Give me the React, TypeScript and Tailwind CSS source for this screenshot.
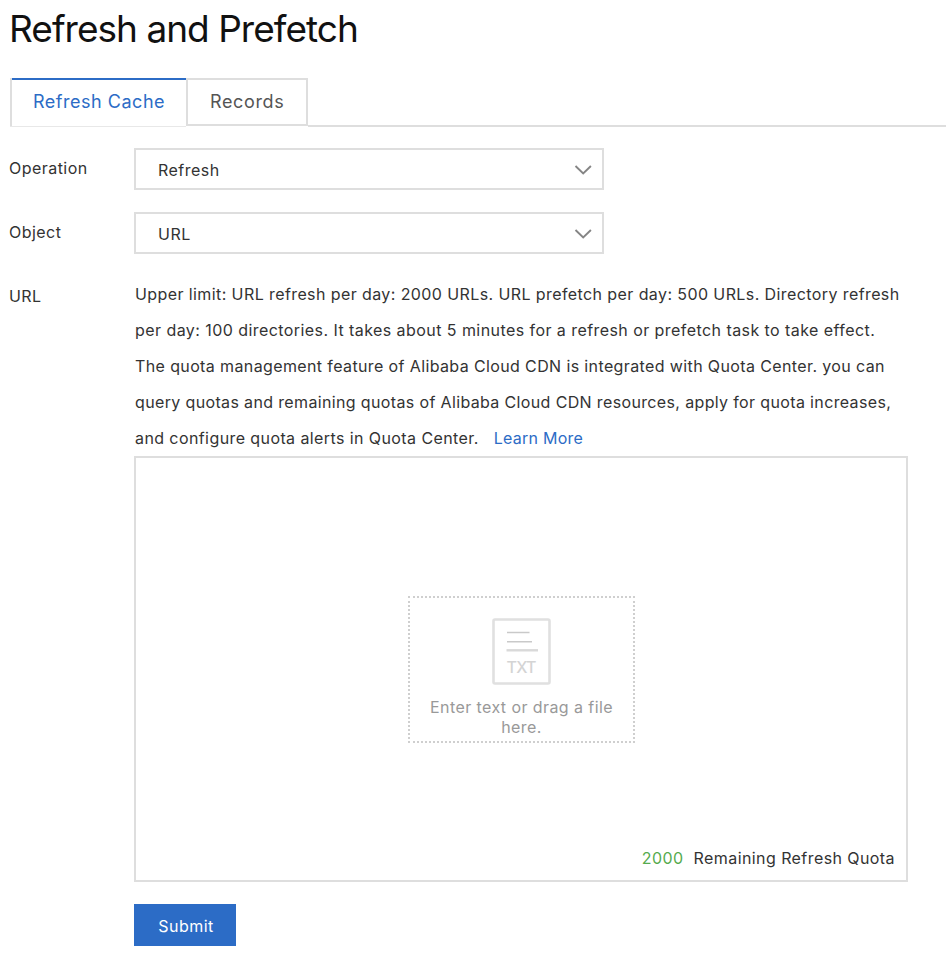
import type { ReactNode } from "react";

function Tab({ active, children }: { active?: boolean; children: ReactNode }) {
  return active ? (
    <div className="flex h-[49px] w-44 flex-col border-l-2 border-[#dedede]">
      <div className="h-0.5 bg-[#2c6cc6]" />
      <div className="flex h-[43px] items-center pl-[21px] text-[18px] tracking-[0.52px] text-[#2c6cc6]">{children}</div>
      <div className="-ml-0.5 mt-auto h-px bg-[#e8e8e8]" />
    </div>
  ) : (
    <div className="flex h-12 w-[122px] items-center border-2 border-[#dedede] pl-[22px] text-[18px] tracking-[0.65px] text-[#555]">
      {children}
    </div>
  );
}

function SelectRow({ label, value }: { label: string; value: string }) {
  return (
    <div className="flex h-[42px]">
      <div className="-ml-px w-[125px] pt-2 tracking-[0.46px]">{label}</div>
      <div className="flex w-[470px] items-center justify-between border-2 border-[#dedede] pr-2.5 pl-[22px] tracking-[0.47px]">
        <span className="pt-0.5">{value}</span>
        <svg className="mt-px" width="18" height="12" viewBox="0 0 18 12" fill="none" stroke="#858585" strokeWidth="1.9">
          <path d="M1.5 2L9.2 9.5L16.9 2" />
        </svg>
      </div>
    </div>
  );
}

function TxtIcon() {
  return (
    <svg className="ml-px" width="59" height="67" viewBox="0 0 59 67" fill="none">
      <rect x="1.5" y="1.5" width="56" height="64" rx="1.5" stroke="#e0e0e0" strokeWidth="2.6" />
      <path d="M15 14.5H37.5M15 23.7H40" stroke="#c9c9c9" strokeWidth="1.4" />
      <path d="M14.5 32.3H46" stroke="#d9d9d9" strokeWidth="2.4" />
      <text x="14.5" y="54.5" fontSize="16" fontFamily="Inter, sans-serif" fontWeight="500" fill="#d4d4d4" textLength="30">
        TXT
      </text>
    </svg>
  );
}

export default function App() {
  return (
    <main className="h-[970px] overflow-hidden bg-white pl-2.5 font-['Inter',sans-serif] text-base leading-6 text-[#333]">
      <h1 className="-ml-px h-[78px] pt-[7px] text-[37px] leading-[44px] tracking-[-0.98px] text-[#111]">
        Refresh and Prefetch
      </h1>

      <div className="flex h-[49px]">
        <Tab active>Refresh Cache</Tab>
        <Tab>Records</Tab>
        <div className="flex-1 border-b-2 border-[#dedede]" />
      </div>

      <div className="mt-[21px] flex flex-col gap-[22px]">
        <SelectRow label="Operation" value="Refresh" />
        <SelectRow label="Object" value="URL" />
        <div className="flex">
          <div className="-ml-px w-[125px] pt-2 tracking-[0.46px]">URL</div>
          <div className="w-[774px]">
            <div className="pl-px leading-9 whitespace-nowrap">
              <p className="tracking-[0.406px]">
                Upper limit: URL refresh per day: 2000 URLs. URL prefetch per day: 500 URLs. Directory refresh
              </p>
              <p className="tracking-[0.436px]">
                per day: 100 directories. It takes about 5 minutes for a refresh or prefetch task to take effect.
              </p>
              <p className="tracking-[0.379px]">
                The quota management feature of Alibaba Cloud CDN is integrated with Quota Center. you can
              </p>
              <p className="tracking-[0.357px]">
                query quotas and remaining quotas of Alibaba Cloud CDN resources, apply for quota increases,
              </p>
              <p className="tracking-[0.41px]">
                and configure quota alerts in Quota Center.
                <a className="ml-[15px] tracking-[0.25px] text-[#2c6cc6]">Learn More</a>
              </p>
            </div>

            <div className="flex h-[426px] flex-col items-center border-2 border-[#dedede] pt-[138px]">
              <div className="flex h-[147px] w-[227px] flex-col items-center border-2 border-dotted border-[#cfcfcf] pt-5">
                <TxtIcon />
                <p className="mt-3 ml-px text-center leading-5 tracking-[0.42px] text-[#999]">
                  Enter text or drag a file
                  <br />
                  here.
                </p>
              </div>
              <div className="mt-auto flex gap-2.5 self-end pr-[11px] pb-2.5 tracking-[0.42px]">
                <span className="text-[#55ab4e]">2000</span>
                <span>Remaining Refresh Quota</span>
              </div>
            </div>

            <button className="mt-[22px] flex h-[42px] w-[102px] items-center justify-center bg-[#2c6cc6] pt-0.5 pl-0.5 tracking-[0.5px] text-white">
              Submit
            </button>
          </div>
        </div>
      </div>
    </main>
  );
}
